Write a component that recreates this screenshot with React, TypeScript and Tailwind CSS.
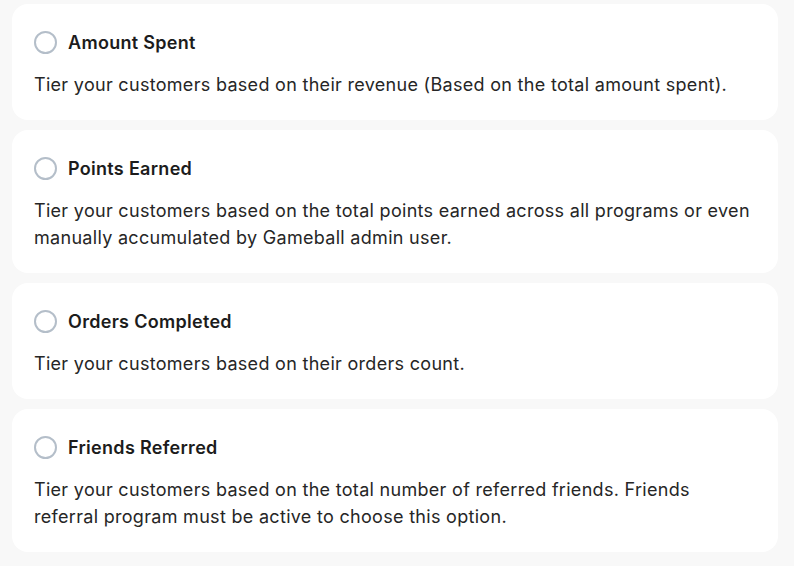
const options = [
  {
    title: "Amount Spent",
    description:
      "Tier your customers based on their revenue (Based on the total amount spent).",
  },
  {
    title: "Points Earned",
    description:
      "Tier your customers based on the total points earned across all programs or even manually accumulated by Gameball admin user.",
  },
  {
    title: "Orders Completed",
    description: "Tier your customers based on their orders count.",
  },
  {
    title: "Friends Referred",
    description:
      "Tier your customers based on the total number of referred friends. Friends referral program must be active to choose this option.",
  },
];

export default function App() {
  return (
    <div
      className="min-h-[566px] w-[794px] bg-[#f8f8f8] pt-1 pl-3 pr-4"
      style={{ fontFamily: "Inter, 'Noto Sans', sans-serif" }}
    >
      <div className="flex flex-col gap-[10px]">
        {options.map((o) => (
          <label
            key={o.title}
            className="block rounded-2xl bg-white px-[22px] pt-6 pb-[22px]"
          >
            <div className="flex h-7 items-center gap-[11px]">
              <span className="h-[23px] w-[23px] rounded-full border-2 border-[#b4bec9] bg-white" />
              <span className="text-[18px] font-semibold tracking-[0.3px] text-[#1c1c1c]">
                {o.title}
              </span>
            </div>
            <p className="mt-[15px] text-[18px] leading-[27px] tracking-[0.3px] text-[#262626]">
              {o.description}
            </p>
          </label>
        ))}
      </div>
    </div>
  );
}
